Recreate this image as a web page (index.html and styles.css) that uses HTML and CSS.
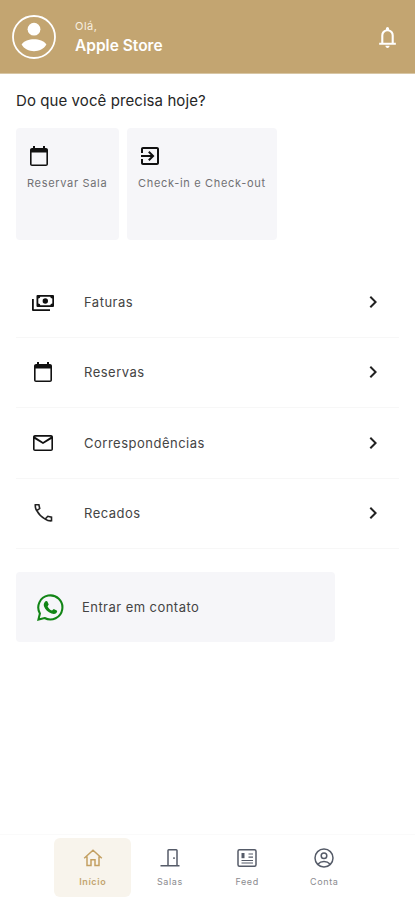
FILE: index.html
```html
<!DOCTYPE html>
<html lang="pt-BR">
<head>
    <meta charset="UTF-8">
    <meta name="viewport" content="width=device-width, initial-scale=1.0">
    <title>Início</title>
    <link rel="stylesheet" href="styles.css">
</head>
<body>
    <header class="header">
        <svg class="avatar" viewBox="0 0 44 44">
            <circle cx="22" cy="22" r="21" fill="none" stroke="#fff" stroke-width="1.8"/>
            <circle cx="22" cy="14.2" r="6.4"/>
            <path d="M9.6 29.600C12 25.600 17 24.200 22 24.200S32 25.600 34.400 29.600C32 34 27 36.200 22 36.200S12 34 9.600 29.600z"/>
        </svg>
        <div class="greeting">
            <span>Olá,</span>
            <strong>Apple Store</strong>
        </div>
        <svg class="bell" viewBox="0 0 24 24"><path d="M4 19v-2h2v-7q0-2.075 1.250-3.687T10.500 4.200v-.7q0-.625.438-1.062T12 2t1.063.438T13.500 3.500v.7q2 .5 3.250 2.113T18 10v7h2v2zm8 3q-.825 0-1.412-.587T10 20h4q0 .825-.587 1.413T12 22m-4-5h8v-7q0-1.650-1.175-2.825T12 6 9.175 7.175 8 10z"/></svg>
    </header>

    <main class="content">
        <h1 class="title">Do que você precisa hoje?</h1>

        <!-- Shortcuts -->
        <div class="cards">
            <a class="card card-room" href="#">
                <svg class="icon" viewBox="0 0 24 24"><path d="M19 4h-1V2h-2v2H8V2H6v2H5c-1.100 0-2 .9-2 2v14c0 1.100.9 2 2 2h14c1.100 0 2-.9 2-2V6c0-1.100-.9-2-2-2zm.4 16.400H4.600V8.500h14.800z"/></svg>
                <span>Reservar Sala</span>
            </a>
            <a class="card card-check" href="#">
                <svg class="icon" viewBox="0 0 24 24"><path d="M10.090 15.590L11.500 17l5-5-5-5-1.410 1.410L12.670 11H3v2h9.670zM19 3H5c-1.110 0-2 .9-2 2v4h2V5h14v14H5v-4H3v4c0 1.100.89 2 2 2h14c1.100 0 2-.9 2-2V5c0-1.100-.9-2-2-2z"/></svg>
                <span>Check-in e Check-out</span>
            </a>
        </div>

        <!-- Menu -->
        <nav class="menu">
            <a class="row" href="#">
                <svg class="icon" viewBox="0 0 24 24"><path fill-rule="evenodd" d="M6.500 5H22q1 0 1 1v10q0 1-1 1H6.500q-1 0-1-1V6q0-1 1-1zm2.800 1.800q0 1.800-2 1.800v4.800q2 0 2 1.800h10q0-1.800 2-1.800V8.600q-2 0-2-1.800z"/><circle cx="14.300" cy="11" r="2.700"/><path d="M1 9h1.800v10.200H19V21H2q-1 0-1-1z"/></svg>
                <span>Faturas</span>
                <svg class="arrow" viewBox="0 0 24 24"><path d="M10 6L8.590 7.410 13.170 12l-4.580 4.590L10 18l6-6z"/></svg>
            </a>
            <a class="row" href="#">
                <svg class="icon" viewBox="0 0 24 24"><path d="M19 4h-1V2h-2v2H8V2H6v2H5c-1.100 0-2 .9-2 2v14c0 1.100.9 2 2 2h14c1.100 0 2-.9 2-2V6c0-1.100-.9-2-2-2zm.4 16.400H4.600V8.500h14.800z"/></svg>
                <span>Reservas</span>
                <svg class="arrow" viewBox="0 0 24 24"><path d="M10 6L8.590 7.410 13.170 12l-4.580 4.590L10 18l6-6z"/></svg>
            </a>
            <a class="row" href="#">
                <svg class="icon" viewBox="0 0 24 24"><path d="M20 4H4c-1.100 0-2 .9-2 2v12c0 1.100.9 2 2 2h16c1.100 0 2-.9 2-2V6c0-1.100-.9-2-2-2zm.4 14.400H3.600V8l8.400 5 8.400-5zM12 11L4 5.800h16z"/></svg>
                <span>Correspondências</span>
                <svg class="arrow" viewBox="0 0 24 24"><path d="M10 6L8.590 7.410 13.170 12l-4.580 4.590L10 18l6-6z"/></svg>
            </a>
            <a class="row" href="#">
                <svg class="icon icon-line" viewBox="0 0 24 24"><path d="M4.300 3.800h3.600l.8 3.600-2.900 2.300Q4 7.200 4.300 3.800zM5.800 9.700q2.900 5.500 8.400 8.400l2.600-2.800 3.700.9v3.600q-3.300.3-6.300-1.700"/></svg>
                <span>Recados</span>
                <svg class="arrow" viewBox="0 0 24 24"><path d="M10 6L8.590 7.410 13.170 12l-4.580 4.590L10 18l6-6z"/></svg>
            </a>
        </nav>

        <a class="contact" href="#">
            <svg class="whatsapp" viewBox="0 0 26 26">
                <path d="M1.400 24.600L2.800 18.700A11.600 11.600 0 1 1 7.300 23.100z" fill="none" stroke="#128516" stroke-width="2"/>
                <path d="M8 7.200c.7-.7 1.700-.6 2 .1l1.200 2.600c.3.600-.9 1.500-1 2.100.9 1.900 2.300 3.200 4.200 4 .6-.1 1.400-1.700 2.100-1.400l2.500 1.200c.8.400.3 2-.6 2.700-1 .8-2.600 1-4.400.3-3.500-1.300-6-3.800-7.200-6.800-.7-1.800-.1-3.500 1.200-4.800z" fill="#128516"/>
            </svg>
            <span>Entrar em contato</span>
        </a>
    </main>

    <!-- Bottom bar -->
    <nav class="tabs">
        <a class="tab active" href="#">
            <svg viewBox="0 0 20 20"><path d="M1.200 10.200L10 2.300l8.800 7.900M4 8.500v9h4v-5.700h4v5.700h4v-9"/></svg>
            <span>Início</span>
        </a>
        <a class="tab" href="#">
            <svg viewBox="0 0 20 20"><path d="M.5 17.700h19M8 17.500V2.600q0-.8.8-.8h7.400q.8 0 .8.8v14.900M14 9.200v1.800"/></svg>
            <span>Salas</span>
        </a>
        <a class="tab" href="#">
            <svg viewBox="0 0 20 20"><rect x="1" y="1.800" width="18" height="16.500" rx="1.500"/><path d="M11.500 6H16M11.500 9.200H16M4.500 12.500H16M4.500 15H16" stroke-width="1.200"/><path d="M6 5v5.200" stroke-width="3"/></svg>
            <span>Feed</span>
        </a>
        <a class="tab" href="#">
            <svg viewBox="0 0 20 20"><circle cx="10" cy="10" r="9"/><circle cx="10" cy="7.800" r="2.800"/><path d="M3.800 16.300q2.600-2.700 6.200-2.700t6.200 2.700"/></svg>
            <span>Conta</span>
        </a>
    </nav>
</body>
</html>
```

FILE: styles.css
```css
* {
    box-sizing: border-box;
}
body {
    font-family: Inter, "Liberation Sans", sans-serif;
    margin: 0;
    height: 900px;
    display: flex;
    flex-direction: column;
    background-color: #fff;
    color: #333;
}
a {
    color: inherit;
    text-decoration: none;
}
svg {
    display: block;
    flex-shrink: 0;
}
.header {
    height: 74px;
    padding: 1px 15px 0 12px;
    display: flex;
    align-items: center;
    background-color: #c3a571;
    border-bottom: 1px solid #d8c6a4;
    color: #fff;
}
.avatar {
    width: 44px;
    height: 44px;
    fill: #fff;
}
.greeting {
    margin-left: 19px;
    flex-grow: 1;
    display: flex;
    flex-direction: column;
}
.greeting span {
    font-size: 11px;
    line-height: 17px;
    letter-spacing: 0.5px;
    color: #f8efe0;
}
.greeting strong {
    font-size: 15.5px;
    line-height: 21px;
    font-weight: 600;
}
.bell {
    width: 25px;
    height: 25px;
    fill: #fff;
}
.content {
    padding: 17px 16px 0;
    flex-grow: 1;
}
.title {
    margin: 0 0 17px;
    font-size: 15px;
    line-height: 20px;
    font-weight: 400;
    letter-spacing: 0.08px;
    color: #262626;
}
.cards {
    display: flex;
    gap: 8px;
}
.card {
    height: 112px;
    padding: 16px 11px;
    background-color: #f6f6f9;
    border-radius: 4px;
    font-size: 11px;
    line-height: 16px;
    letter-spacing: 0.68px;
    white-space: nowrap;
    color: #707073;
}
.card span {
    display: block;
    margin-top: 7px;
}
.card-room {
    width: 103px;
}
.card-check {
    width: 150px;
}
.icon {
    width: 24px;
    height: 24px;
    fill: #111;
}
.icon-line {
    fill: none;
    stroke: #222;
    stroke-width: 1.6;
}
.menu {
    margin-top: 27px;
}
.row {
    height: 70.5px;
    padding: 1px 14px 1px 15px;
    display: flex;
    align-items: center;
    border-bottom: 1px solid #f7f7f7;
    font-size: 13px;
    letter-spacing: 0.5px;
    color: #444;
}
.row span {
    margin-left: 29px;
    flex-grow: 1;
}
.arrow {
    width: 24px;
    height: 24px;
    fill: #222;
}
.contact {
    width: 319px;
    height: 70px;
    margin-top: 23px;
    padding-left: 21px;
    display: flex;
    align-items: center;
    gap: 18px;
    background-color: #f6f6f9;
    border-radius: 4px;
    font-size: 13px;
    letter-spacing: 0.45px;
    color: #444;
}
.whatsapp {
    width: 27px;
    height: 27px;
}
.tabs {
    height: 66px;
    padding: 3px 0 0 2px;
    display: flex;
    justify-content: center;
    border-top: 1px solid #fafafa;
}
.tab {
    width: 77.2px;
    height: 59px;
    padding-top: 10px;
    display: flex;
    flex-direction: column;
    align-items: center;
    border-radius: 6px;
    font-size: 9px;
    line-height: 12px;
    letter-spacing: 0.6px;
    color: #8b8b8f;
}
.tab svg {
    width: 20px;
    height: 20px;
    margin-bottom: 8px;
    fill: none;
    stroke: #555b68;
    stroke-width: 1.5;
}
.tab.active {
    background-color: #f8f4ec;
    color: #c3a571;
    font-weight: 600;
}
.tab.active svg {
    stroke: #c3a062;
}
```
